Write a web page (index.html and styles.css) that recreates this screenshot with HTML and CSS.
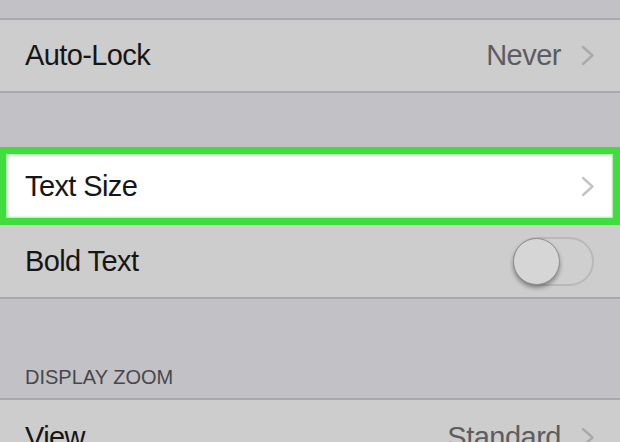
FILE: index.html
```html
<!DOCTYPE html>
<html>
<head>
<meta charset="utf-8">
<link rel="stylesheet" href="styles.css">
</head>
<body>
<div class="screen">
  <div class="gap gap-top"></div>
  <div class="row row-first">
    <span class="label">Auto-Lock</span>
    <span class="right"><span class="value">Never</span>
      <svg class="chev" width="14" height="21" viewBox="0 0 14 21"><polyline points="2,2 11.5,10.5 2,19" fill="none" stroke="#a9a9a9" stroke-width="2.4" stroke-linecap="round" stroke-linejoin="round"/></svg>
    </span>
  </div>
  <div class="gap gap-mid"></div>
  <div class="row row-highlight">
    <span class="label">Text Size</span>
    <span class="right">
      <svg class="chev" width="14" height="21" viewBox="0 0 14 21"><polyline points="2,2 11.5,10.5 2,19" fill="none" stroke="#c4c4c6" stroke-width="2.4" stroke-linecap="round" stroke-linejoin="round"/></svg>
    </span>
  </div>
  <div class="row row-last">
    <span class="label">Bold Text</span>
    <span class="toggle"><span class="knob"></span></span>
  </div>
  <div class="gap gap-header">
    <span class="section-title">DISPLAY ZOOM</span>
  </div>
  <div class="row row-first row-view">
    <span class="label">View</span>
    <span class="right"><span class="value">Standard</span>
      <svg class="chev" width="14" height="21" viewBox="0 0 14 21"><polyline points="2,2 11.5,10.5 2,19" fill="none" stroke="#a9a9a9" stroke-width="2.4" stroke-linecap="round" stroke-linejoin="round"/></svg>
    </span>
  </div>
</div>
</body>
</html>
```
FILE: styles.css
```css
html, body {
  margin: 0;
  padding: 0;
  background: #c2c1c6;
}
.screen {
  width: 620px;
  height: 442px;
  overflow: hidden;
  display: flex;
  flex-direction: column;
  font-family: "Liberation Sans", Arial, sans-serif;
}
.gap { flex: none; }
.gap-top { height: 18px; }
.gap-mid { height: 54px; }
.gap-header {
  height: 99px;
  display: flex;
  align-items: flex-end;
  padding-left: 25px;
  padding-bottom: 9px;
  box-sizing: border-box;
}
.section-title {
  font-size: 20px;
  color: #48484c;
}
.row {
  flex: none;
  display: flex;
  align-items: center;
  justify-content: space-between;
  background: #cdcdcd;
  padding: 0 25px 0 25px;
  box-sizing: border-box;
}
.row-first {
  height: 75px;
  border-top: 2px solid #a9a9ad;
  border-bottom: 2px solid #a9a9ad;
}
.row-view { height: 76px; border-bottom: none; }
.row-highlight {
  height: 78px;
  background: #ffffff;
  border: 7px solid #3fdd3d;
  border-left-width: 6px;
  padding: 0 18px 0 19px;
  box-shadow: inset 0 0 2px 1px #9ff09c;
}
.row-last {
  height: 74px;
  border-bottom: 2px solid #a9a9ad;
}
.label {
  font-size: 29px;
  letter-spacing: -0.6px;
  color: #161616;
}
.right {
  display: flex;
  align-items: center;
  gap: 20px;
}
.value {
  font-size: 29px;
  letter-spacing: -0.5px;
  color: #5d5d5f;
}
.chev { display: block; }
.toggle {
  position: relative;
  width: 81px;
  height: 49px;
  border: 2px solid #b9b9b9;
  border-radius: 26px;
  box-sizing: border-box;
  background: #cfcfcf;
  margin-right: 1px;
}
.knob {
  position: absolute;
  left: -2px;
  top: -1px;
  width: 47px;
  height: 47px;
  border-radius: 50%;
  background: #d6d6d6;
  border: 1px solid #8e8e8e;
  box-sizing: border-box;
  box-shadow: 0 3px 4px rgba(0,0,0,0.35);
}
```
